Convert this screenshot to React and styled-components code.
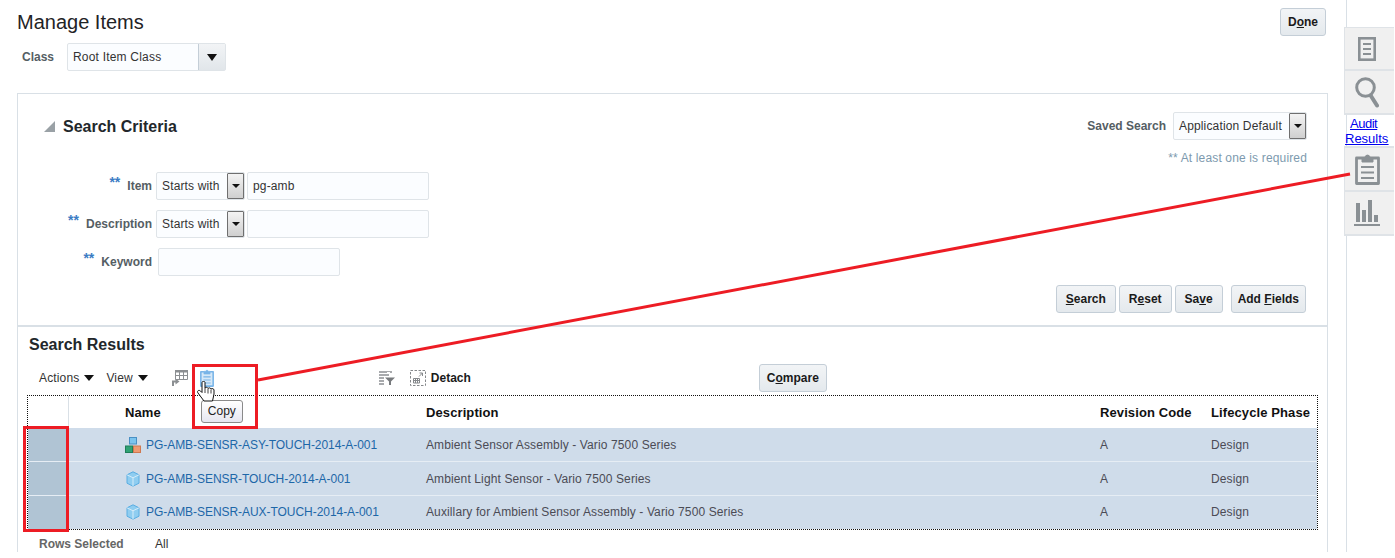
import React from "react";
import styled, { createGlobalStyle } from "styled-components";

const Global = createGlobalStyle`
  html, body { margin: 0; padding: 0; background: #fff; }
  body { font-family: "Liberation Sans", Arial, sans-serif; font-size: 12px; color: #333; }
  #root { width: 1395px; height: 558px; overflow: hidden; }
  * { box-sizing: border-box; }
`;

const Page = styled.div`
  position: relative; display: flex; width: 1395px; height: 558px; overflow: hidden;
`;
const Main = styled.main`
  width: 1346px; height: 552px; padding: 8px 18px 0 17px; flex: none; overflow: hidden;
`;
const Header = styled.header`
  display: flex; justify-content: space-between; align-items: flex-start; padding-right: 2px; height: 28px;
`;
const Title = styled.h1`
  margin: 0; font-size: 20px; font-weight: 400; line-height: 28px; color: #1f2326;
`;
const Btn = styled.button`
  height: 28px; padding: 0 ${p => p.$pad ?? 8}px; margin-left: ${p => p.$gap ?? 0}px;
  font: bold 12px "Liberation Sans", Arial, sans-serif; color: #1a1a1a;
  border: 1px solid #c4ced7; border-radius: 3px;
  background: linear-gradient(#f2f4f6, #e4e9ed);
  u { text-underline-offset: 1px; }
`;
const ClassRow = styled.div`
  display: flex; align-items: center; margin-top: 7px; padding-left: 5px; height: 28px;
`;
const ClassLabel = styled.span`
  width: 45px; font-weight: 700; color: #555e64;
`;
const Combo = styled.div`
  display: flex; width: 159px; height: 28px; border: 1px solid #dfe4e8; border-radius: 2px; background: #fbfdff;
`;
const ComboText = styled.span`
  flex: 1; padding-left: 5px; line-height: 26px; color: #333; letter-spacing: 0.2px;
`;
const ComboBtn = styled.span`
  width: 27px; display: flex; align-items: center; justify-content: center;
  border-left: 1px solid #c4ced7; background: linear-gradient(#f2f4f6, #e1e6ea);
`;
const Tri = styled.i`
  display: block; width: 0; height: 0; border-style: solid;
  border-width: ${p => p.$h ?? 7}px ${p => p.$w ?? 5}px 0; border-color: #111 transparent transparent;
`;
const Panel = styled.section`
  margin-top: 22px; width: 1311px; height: 470px; border: 1px solid #d9e0e6;
`;
const Criteria = styled.div`
  height: 233px; padding-top: 18px; border-bottom: 2px solid #d9e0e6;
`;
const CritHead = styled.div`
  display: flex; justify-content: space-between; height: 60px; padding: 0 20px 0 26px;
`;
const CritTitle = styled.div`
  display: flex; align-items: center; gap: 8px; height: 28px; padding-top: 1px;
`;
const Corner = styled.i`
  width: 0; height: 0; border-style: solid; border-width: 0 0 11px 11px;
  border-color: transparent transparent #9aa1a6 transparent;
`;
const H2 = styled.h2`
  margin: 0; font-size: 16px; line-height: 28px; font-weight: 700; color: #22272b;
`;
const SavedBox = styled.div`
  display: flex; flex-direction: column; align-items: flex-end;
`;
const SavedRow = styled.div`
  display: flex; align-items: center; gap: 7px; height: 28px;
`;
const Label = styled.label`
  font-weight: 700; color: #555e64;
`;
const Hint = styled.div`
  margin-top: 9px; line-height: 18px; color: #7d9aae; letter-spacing: 0.15px;
`;
const NativeSel = styled.div`
  display: flex; align-items: center; width: ${p => p.$w}px; height: 28px; padding: 0 0 0 5px;
  border: 1px solid #dfe4e8; border-radius: 2px; background: #fbfdff; color: #333; justify-content: space-between;
  letter-spacing: 0.15px;
`;
const NativeArrow = styled.span`
  width: 17px; height: 26px; display: flex; align-items: center; justify-content: center;
  border: 1px solid #6f6f6f; border-radius: 1px; background: linear-gradient(#f3f3f3, #cfcfcf);
`;
const Form = styled.div`
  display: flex; flex-direction: column; gap: 10px;
`;
const FormRow = styled.div`
  display: flex; align-items: center; height: 28px;
`;
const FormLabel = styled.div`
  width: 134px; display: flex; justify-content: flex-end; align-items: center; gap: 7px; margin-right: 4px;
`;
const Stars = styled.sup`
  font-size: 14px; font-weight: 700; color: #3b7cc4; line-height: 10px; margin-top: -9px;
`;
const Input = styled.div`
  width: ${p => p.$w}px; height: 28px; margin-left: ${p => p.$ml ?? 0}px; padding-left: 5px; line-height: 27px;
  border: 1px solid #dfe4e8; border-radius: 2px; background: #fbfdff; color: #333; letter-spacing: 0.15px;
`;
const ActionRow = styled.div`
  display: flex; justify-content: flex-end; gap: 3px; margin-top: 9px; padding-right: 21px;
`;
const Results = styled.div`
  padding: 4px 9px 0 9px;
`;
const ResTitle = styled.h2`
  margin: 0 0 0 2px; font-size: 16px; line-height: 28px; font-weight: 700; color: #22272b;
`;
const Toolbar = styled.div`
  display: flex; align-items: center; height: 28px; margin-top: 5px; position: relative;
`;
const Menu = styled.span`
  display: flex; align-items: center; gap: 5px; margin-left: ${p => p.$ml}px; color: #333; letter-spacing: 0.15px;
`;
const IconWrap = styled.span`
  display: flex; position: relative; margin-left: ${p => p.$ml}px;
`;
const Detach = styled.span`
  font-weight: 700; color: #1a1a1a; margin-left: 5px;
`;
const Tooltip = styled.div`
  position: absolute; left: 1px; top: 31px; width: 42px; height: 23px; text-align: center; line-height: 21px;
  border: 1px solid #8a8a8a; border-radius: 3px; background: linear-gradient(#fff, #e6e6f0); color: #222; z-index: 3;
`;
const Hand = styled.svg`
  position: absolute; left: -3px; top: 12px; z-index: 4;
`;
const Table = styled.div`
  margin-top: 3px; width: 1291px; height: 135px; border: 1px dotted #111;
`;
const Grid = styled.div`
  display: grid; grid-template-columns: 41px 56px 301px 674px 111px 1fr; align-items: center;
  height: ${p => p.$h}px;
  background: ${p => p.$sel ? "#cfdcea" : "#fff"};
  border-top: ${p => p.$sep ? "1px solid #e6edf4" : "0"};
`;
const RowHead = styled.div`
  align-self: stretch; background: ${p => p.$sel ? "#b0c4d4" : "#fff"};
  border-right: ${p => p.$sel ? "0" : "1px solid #d9e0e6"};
`;
const Th = styled.div`
  font-size: 13px; font-weight: 700; color: #111; letter-spacing: 0.1px; white-space: nowrap;
`;
const Td = styled.div`
  color: #4b4b55; letter-spacing: 0.12px; margin-top: ${p => p.$up ? -2 : 0}px;
`;
const NameCell = styled.div`
  display: flex; align-items: center; gap: 5px; margin-top: ${p => p.$up ? -2 : 0}px;
`;
const IconSlot = styled.span`
  display: flex; justify-content: center; width: 16px;
`;
const Link = styled.a`
  color: #1d67a8; text-decoration: none; letter-spacing: -0.05px;
`;
const Footer = styled.div`
  display: flex; margin-top: 7px; padding-left: 12px; line-height: 15px;
`;
const Fl = styled.span`
  width: 116px; font-weight: 700; color: #666;
`;
const Side = styled.aside`
  width: 49px; height: 552px; flex: none; padding-top: 27px; border-left: 1px solid #d9e0e6;
`;
const Tab = styled.div`
  display: flex; align-items: center; justify-content: center; width: 50px; height: 44px; margin-left: -3px; padding-right: 5px;
  background: #f0f0f0; border: 1px solid #dfe3e7; border-width: 0 0 2px 1px;
  border-top: ${p => p.$first ? "1px solid #dfe3e7" : "0"};
`;
const AuditLink = styled.a`
  display: block; width: 50px; height: 33px; margin-left: -3px; padding: 1px 0 0 1px; line-height: 15px; font-size: 13px;
  color: #0000ee; text-decoration: underline; border-bottom: 2px solid #dfe3e7;
`;
const AuditWord = styled.span`
  display: block; margin-left: ${p => p.$ml ?? 0}px; letter-spacing: ${p => p.$ls ?? 0}px; text-decoration: underline;
`;
const Overlay = styled.svg`
  position: absolute; left: 0; top: 0; pointer-events: none; z-index: 5;
`;

const G = "#8a9094";
const DocIcon = () => (
  <svg width="18" height="24" viewBox="0 0 18 24" fill="none" stroke={G} strokeWidth="2.6">
    <rect x="1.300" y="1.300" width="15.400" height="21.400" />
    <path d="M5 7h8M5 12h8M5 17h8" strokeWidth="1.800" />
  </svg>
);
const SearchIcon = () => (
  <svg width="24" height="31" viewBox="0 0 24 31" fill="none" stroke={G}>
    <circle cx="10.500" cy="10.500" r="8.800" strokeWidth="3" />
    <path d="M16 19l6 9.500" strokeWidth="4" strokeLinecap="round" />
  </svg>
);
const ClipIcon = ({ w = 25, h = 32, c = G, fill = "none" }) => (
  <svg width={w} height={h} viewBox="0 0 25 32" fill="none" stroke={c}>
    <path d="M7 5H1.500v25.500h22V5H18" fill={fill} strokeWidth="2.800" strokeLinejoin="round" />
    <path d="M7 9V4h3a2.600 2.600 0 0 1 5 0h3v5z" fill={c} strokeWidth="1" />
    <path d="M6 14h13M6 19.500h13M6 25h13" strokeWidth="2" />
  </svg>
);
const BarsIcon = () => (
  <svg width="26" height="26" viewBox="0 0 26 26" fill={G}>
    <rect x="2" y="3" width="4" height="19" />
    <rect x="8" y="10" width="4" height="12" />
    <rect x="14" y="0" width="4" height="22" />
    <rect x="20" y="15" width="4" height="7" />
    <rect y="24" width="26" height="2" />
  </svg>
);
const ExportIcon = () => (
  <svg width="16" height="16" viewBox="0 0 16 16" fill="none" stroke="#8c8f92">
    <rect x="3" y="0" width="13" height="2.500" fill="#8c8f92" stroke="none" />
    <path d="M3.500 2v7.500h12V2M3.500 5.500h12M7.500 2v7.500M11.500 2v7.500" />
    <path d="M1 16v-4.500h3" strokeWidth="2" />
    <path d="M3.500 8.500l4 3-4 3z" fill="#8c8f92" stroke="none" />
  </svg>
);
const FilterIcon = () => (
  <svg width="16" height="14" viewBox="0 0 16 14" fill="none" stroke="#8c8f92">
    <path d="M0 1h13M0 4h10M0 7h5M0 10h5M0 13h5" strokeWidth="1.400" />
    <path d="M6 6.500h10l-4 4V14h-2v-3.500z" fill="#777a7d" stroke="none" />
    <path d="M8 1.500h3" stroke="#fff" />
  </svg>
);
const DetachIcon = () => (
  <svg width="16" height="16" viewBox="0 0 16 16" fill="none" stroke="#85888b">
    <rect x="0.500" y="0.500" width="15" height="15" strokeDasharray="2.500 1.500" />
    <path d="M3.500 8.500h6v4.500h-6zM3.500 10.500h6M5.500 8.500V13M7.500 8.500V13" />
    <path d="M9 6.500l3.500-3.500M9.500 3h3v3" />
  </svg>
);
const HandCursor = () => (
  <Hand width="18" height="21" viewBox="0 0 18 21">
    <path d="M5 1.500c0-1.500 3-1.500 3 0V7c1-1 2.500-1 3 .5c1-1 2.500-.8 3 .5c1-.8 3-.3 3 1V13l-1.500 7H7L1 12c-1.500-2 .8-3.500 2.500-2L5 11.500z" fill="#fff" stroke="#111" strokeWidth="1" strokeLinejoin="round" />
    <path d="M8 7v5M11 8v4.500M14 8.500v4" stroke="#111" strokeWidth=".8" fill="none" />
  </Hand>
);
const AssemblyIcon = () => (
  <svg width="16" height="16" viewBox="0 0 16 16">
    <rect x="4.500" y="0.500" width="7" height="6.500" fill="#7cc4ee" stroke="#4a90c4" />
    <rect x="0.500" y="9" width="7" height="6.500" fill="#2fa274" stroke="#1f7d58" />
    <rect x="8.500" y="9" width="7" height="6.500" fill="#ee9a72" stroke="#cf7850" />
  </svg>
);
const CubeIcon = () => (
  <svg width="14" height="16" viewBox="0 0 14 16" stroke="#5aaee2" strokeWidth="1">
    <path d="M7 .8l6 3v8.400l-6 3-6-3V3.800z" fill="#8fcdf0" />
    <path d="M1 3.800l6 3 6-3M7 6.800v8.400" fill="none" stroke="#d5ecf9" />
  </svg>
);

const rows = [
  { icon: <AssemblyIcon />, name: "PG-AMB-SENSR-ASY-TOUCH-2014-A-001", desc: "Ambient Sensor Assembly - Vario 7500 Series", h: 33 },
  { icon: <CubeIcon />, name: "PG-AMB-SENSR-TOUCH-2014-A-001", desc: "Ambient Light Sensor - Vario 7500 Series", h: 34 },
  { icon: <CubeIcon />, name: "PG-AMB-SENSR-AUX-TOUCH-2014-A-001", desc: "Auxillary for Ambient Sensor Assembly - Vario 7500 Series", h: 34, up: true },
];

export default function App() {
  return (
    <Page>
      <Global />
      <Main>
        <Header>
          <Title>Manage Items</Title>
          <Btn $pad={7}>D<u>o</u>ne</Btn>
        </Header>
        <ClassRow>
          <ClassLabel>Class</ClassLabel>
          <Combo>
            <ComboText>Root Item Class</ComboText>
            <ComboBtn><Tri /></ComboBtn>
          </Combo>
        </ClassRow>
        <Panel>
          <Criteria>
            <CritHead>
              <CritTitle><Corner /><H2>Search Criteria</H2></CritTitle>
              <SavedBox>
                <SavedRow>
                  <Label>Saved Search</Label>
                  <NativeSel $w={134}>Application Default<NativeArrow><Tri $h={4} $w={4} /></NativeArrow></NativeSel>
                </SavedRow>
                <Hint>** At least one is required</Hint>
              </SavedBox>
            </CritHead>
            <Form>
              <FormRow>
                <FormLabel><Stars>**</Stars><Label>Item</Label></FormLabel>
                <NativeSel $w={89}>Starts with<NativeArrow><Tri $h={4} $w={4} /></NativeArrow></NativeSel>
                <Input $w={182} $ml={2}>pg-amb</Input>
              </FormRow>
              <FormRow>
                <FormLabel><Stars>**</Stars><Label>Description</Label></FormLabel>
                <NativeSel $w={89}>Starts with<NativeArrow><Tri $h={4} $w={4} /></NativeArrow></NativeSel>
                <Input $w={182} $ml={2} />
              </FormRow>
              <FormRow>
                <FormLabel><Stars>**</Stars><Label>Keyword</Label></FormLabel>
                <Input $w={182} $ml={2} />
              </FormRow>
            </Form>
            <ActionRow>
              <Btn $pad={9}><u>S</u>earch</Btn>
              <Btn $pad={9}>R<u>e</u>set</Btn>
              <Btn $pad={9}>Sa<u>v</u>e</Btn>
              <Btn $pad={6} $gap={5}>Add <u>F</u>ields</Btn>
            </ActionRow>
          </Criteria>
          <Results>
            <ResTitle>Search Results</ResTitle>
            <Toolbar>
              <Menu $ml={12}>Actions <Tri $h={6} $w={5} /></Menu>
              <Menu $ml={12}>View <Tri $h={6} $w={5} /></Menu>
              <IconWrap $ml={24}><ExportIcon /></IconWrap>
              <IconWrap $ml={12}>
                <ClipIcon w={14} h={18} c="#78b4e8" fill="#d6e8f7" />
                <HandCursor />
                <Tooltip>Copy</Tooltip>
              </IconWrap>
              <IconWrap $ml={165}><FilterIcon /></IconWrap>
              <IconWrap $ml={15}><DetachIcon /></IconWrap>
              <Detach>Detach</Detach>
              <Btn $pad={7} $gap={288}>C<u>o</u>mpare</Btn>
            </Toolbar>
            <Table>
              <Grid $h={32}>
                <RowHead />
                <span />
                <Th>Name</Th>
                <Th>Description</Th>
                <Th>Revision Code</Th>
                <Th>Lifecycle Phase</Th>
              </Grid>
              {rows.map((r, i) => (
                <Grid key={r.name} $h={r.h} $sel $sep={i > 0}>
                  <RowHead $sel />
                  <span />
                  <NameCell $up={r.up}><IconSlot>{r.icon}</IconSlot><Link>{r.name}</Link></NameCell>
                  <Td $up={r.up}>{r.desc}</Td>
                  <Td $up={r.up}>A</Td>
                  <Td $up={r.up}>Design</Td>
                </Grid>
              ))}
            </Table>
            <Footer><Fl>Rows Selected</Fl><span>All</span></Footer>
          </Results>
        </Panel>
      </Main>
      <Side>
        <Tab $first><DocIcon /></Tab>
        <Tab><SearchIcon /></Tab>
        <AuditLink href="#"><AuditWord $ml={5} $ls={-0.5}>Audit</AuditWord><AuditWord>Results</AuditWord></AuditLink>
        <Tab><ClipIcon /></Tab>
        <Tab><BarsIcon /></Tab>
      </Side>
      <Overlay width="1395" height="558" viewBox="0 0 1395 558" fill="none" stroke="#ed1c24" strokeWidth="3">
        <rect x="193.500" y="365.500" width="63" height="62" />
        <rect x="24.500" y="427.500" width="43" height="103" />
        <path d="M258 380L1350 174" />
      </Overlay>
    </Page>
  );
}
